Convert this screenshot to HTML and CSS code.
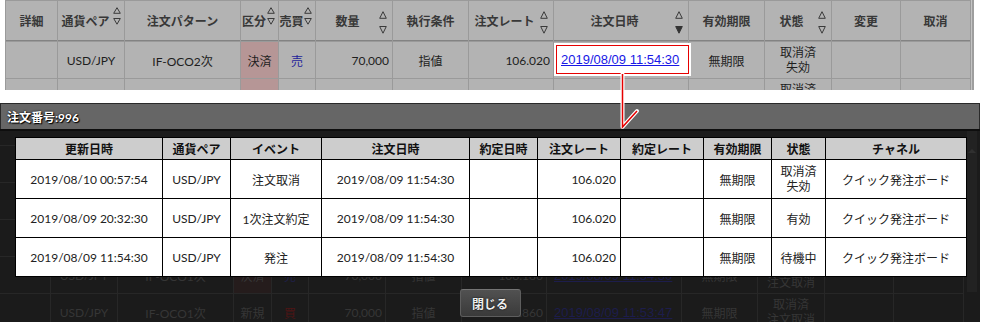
FILE: index.html
```html
<!DOCTYPE html>
<html lang="ja">
<head>
<meta charset="utf-8">
<title>注文履歴</title>
<link rel="stylesheet" href="styles.css">
</head>
<body>
<div class="top">
  <div class="tgrid">
    <div class="th">詳細</div>
    <div class="th sort tight"><span class="lbl">通貨ペア</span><svg class="arr t" width="8" height="18" viewBox="0 0 8 18"><path d="M4 .7 7.3 6.3H.7Z"/><path d="M.7 11.5h6.6L4 17.2Z"/></svg></div>
    <div class="th">注文パターン</div>
    <div class="th sort tight"><span class="lbl">区分</span><svg class="arr t" width="8" height="18" viewBox="0 0 8 18"><path d="M4 .7 7.3 6.3H.7Z"/><path d="M.7 11.5h6.6L4 17.2Z"/></svg></div>
    <div class="th sort tight"><span class="lbl">売買</span><svg class="arr t" width="8" height="18" viewBox="0 0 8 18"><path d="M4 .7 7.3 6.3H.7Z"/><path d="M.7 11.5h6.6L4 17.2Z"/></svg></div>
    <div class="th sort"><span class="lbl">数量</span><svg class="arr w" width="8" height="23" viewBox="0 0 8 23"><path d="M4 .7 7.3 7.3H.7Z"/><path d="M.7 15.5h6.6L4 22.2Z"/></svg></div>
    <div class="th">執行条件</div>
    <div class="th sort"><span class="lbl">注文レート</span><svg class="arr w" width="8" height="23" viewBox="0 0 8 23"><path d="M4 .7 7.3 7.3H.7Z"/><path d="M.7 15.5h6.6L4 22.2Z"/></svg></div>
    <div class="th sort"><span class="lbl">注文日時</span><svg class="arr w" width="8" height="23" viewBox="0 0 8 23"><path d="M4 .7 7.3 7.3H.7Z"/><path class="f" d="M.7 15.5h6.6L4 22.2Z"/></svg></div>
    <div class="th">有効期限</div>
    <div class="th sort"><span class="lbl">状態</span><svg class="arr w" width="8" height="23" viewBox="0 0 8 23"><path d="M4 .7 7.3 7.3H.7Z"/><path d="M.7 15.5h6.6L4 22.2Z"/></svg></div>
    <div class="th">変更</div>
    <div class="th">取消</div>

    <div></div>
    <div>USD/JPY</div>
    <div>IF-OCO2次</div>
    <div class="pink">決済</div>
    <div class="sell">売</div>
    <div class="num">70,000</div>
    <div>指値</div>
    <div class="num">106.020</div>
    <div class="hlcell"><div class="hl"><a class="hl-in" href="#">2019/08/09 11:54:30</a></div></div>
    <div>無期限</div>
    <div class="st"><span>取消済</span><span>失効</span></div>
    <div></div>
    <div></div>

    <div></div><div></div><div></div>
    <div class="pink"></div>
    <div></div><div></div><div></div><div></div><div></div><div></div>
    <div class="st"><span>取消済</span><span>失効</span></div>
    <div></div><div></div>
  </div>
  <div class="tscroll"></div>
</div>

<div class="dlg">
  <div class="dlg-title">注文番号:996</div>
  <div class="dlg-body">
    <div class="dim">
      <div></div><div></div><div></div><div class="dpink"></div><div></div><div></div><div></div><div></div><div></div><div></div><div></div><div></div><div></div>
      <div></div><div></div><div></div><div class="dpink"></div><div></div><div></div><div></div><div></div><div></div><div></div><div></div><div></div><div></div>
      <div></div><div></div><div></div><div class="dpink"></div><div></div><div></div><div></div><div></div><div></div><div></div><div></div><div></div><div></div>
      <div></div>
      <div>USD/JPY</div>
      <div>IF-OCO1次</div>
      <div class="dpink">決済</div>
      <div class="dsell">売</div>
      <div class="num">70,000</div>
      <div>指値</div>
      <div class="num">106.180</div>
      <div class="dlink"><span>2019/08/09 11:54:30</span></div>
      <div>無期限</div>
      <div class="st"><span>取消済</span><span>注文取消</span></div>
      <div></div>
      <div></div>
      <div></div>
      <div>USD/JPY</div>
      <div>IF-OCO1次</div>
      <div>新規</div>
      <div class="dbuy">買</div>
      <div class="num">70,000</div>
      <div>指値</div>
      <div class="num">105.860</div>
      <div class="dlink"><span>2019/08/09 11:53:47</span></div>
      <div>無期限</div>
      <div class="st"><span>取消済</span><span>注文取消</span></div>
      <div></div>
      <div></div>
    </div>
    <div class="dim-scroll"><span class="dim-up"></span></div>

    <div class="dgrid">
      <div class="dh">更新日時</div>
      <div class="dh">通貨ペア</div>
      <div class="dh">イベント</div>
      <div class="dh">注文日時</div>
      <div class="dh">約定日時</div>
      <div class="dh">注文レート</div>
      <div class="dh">約定レート</div>
      <div class="dh">有効期限</div>
      <div class="dh">状態</div>
      <div class="dh">チャネル</div>

      <div>2019/08/10 00:57:54</div>
      <div>USD/JPY</div>
      <div>注文取消</div>
      <div>2019/08/09 11:54:30</div>
      <div></div>
      <div class="num">106.020</div>
      <div></div>
      <div>無期限</div>
      <div class="st"><span>取消済</span><span>失効</span></div>
      <div>クイック発注ボード</div>

      <div>2019/08/09 20:32:30</div>
      <div>USD/JPY</div>
      <div>1次注文約定</div>
      <div>2019/08/09 11:54:30</div>
      <div></div>
      <div class="num">106.020</div>
      <div></div>
      <div>無期限</div>
      <div>有効</div>
      <div>クイック発注ボード</div>

      <div>2019/08/09 11:54:30</div>
      <div>USD/JPY</div>
      <div>発注</div>
      <div>2019/08/09 11:54:30</div>
      <div></div>
      <div class="num">106.020</div>
      <div></div>
      <div>無期限</div>
      <div>待機中</div>
      <div>クイック発注ボード</div>
    </div>

    <button class="close" type="button">閉じる</button>
  </div>
</div>

<svg class="conn" width="981" height="322" viewBox="0 0 981 322">
  <path class="halo" d="M622.5 74V127L637 111"/>
  <path class="ln" d="M622.5 74V127L637 111"/>
</svg>
</body>
</html>
```

FILE: styles.css
```css
* { box-sizing: border-box; }
html, body { margin: 0; padding: 0; }
body {
  width: 981px;
  height: 322px;
  overflow: hidden;
  position: relative;
  background: #fff;
  font-family: Lato, "Noto Sans CJK JP", sans-serif;
  font-size: 12px;
  color: #1e1e1e;
}

/* ---------- dimmed page table (top) ---------- */
.top {
  height: 90px;
  overflow: hidden;
  display: flex;
  align-items: flex-start;
  padding-left: 5px;
}
.tgrid {
  display: grid;
  grid-template-columns: 51px 66px 115px 37px 36px 76px 75px 84px 134px 75px 66px 68px 69px;
  grid-template-rows: 40px 36px 36px;
  gap: 1px;
  padding: 1px;
  background: #9a9a9a;
}
.tgrid > div {
  background: #b3b3b3;
  display: flex;
  align-items: center;
  justify-content: center;
  white-space: nowrap;
}
.tgrid > .th {
  font-weight: bold;
  color: #383838;
  border-bottom: 1px solid #838383;
}
.tgrid > .th.sort {
  justify-content: flex-start;
  padding-right: 5px;
}
.tgrid > .th.tight { padding-right: 3px; }
.lbl { flex: 1; text-align: center; }
.arr { flex: none; }
.arr path { fill: none; stroke: #3a3a3a; stroke-width: 1; }
.arr path.f { fill: #333; stroke: #333; }
.arr.t { align-self: flex-start; margin-top: 6px; }
.arr.w { margin-top: 3px; }

.tgrid > .pink { background: #b69696; }
.tgrid > .sell { color: #24249a; }
.tgrid > .num, .dim > .num { justify-content: flex-end; padding-right: 3px; }
.st { flex-direction: column; line-height: 15px; }
.tgrid > .st { flex-direction: column; }

.tgrid > .hlcell { align-items: flex-start; justify-content: flex-start; }
.hl {
  position: relative;
  z-index: 2;
  margin-top: 1px;
  width: 137px;
  height: 33px;
  flex: none;
  background: #fff;
  padding: 2px;
}
.hl-in {
  display: flex;
  align-items: center;
  height: 100%;
  border: 1px solid #e60000;
  padding-left: 4px;
  font-family: "Liberation Sans", Arial, sans-serif;
  font-size: 13px;
  color: #1818e6;
  text-decoration: underline;
}
.tscroll {
  width: 3px;
  height: 90px;
  border-left: 1px solid #c4c4c4;
  background: #9e9e9e;
}

/* ---------- dialog ---------- */
.dlg {
  width: 980px;
  margin-top: 13px;
}
.dlg-title {
  height: 26px;
  background: #666;
  border: 1px solid #2a2a2a;
  border-bottom: none;
  color: #fff;
  font-weight: bold;
  font-size: 12px;
  padding-left: 6px;
  display: flex;
  align-items: center;
  text-shadow: 0 0 2px #000, 1px 1px 1px #000;
}
.dlg-body {
  position: relative;
  height: 193px;
  overflow: hidden;
  background: #1b1b1b;
  border-top: 2px solid #0e0e0e;
  padding-top: 6px;
}

/* dimmed background rows seen through the modal */
.dim {
  position: absolute;
  top: 14px;
  left: -2px;
  display: grid;
  grid-template-columns: 51px 66px 115px 37px 36px 76px 75px 84px 134px 75px 66px 68px 69px;
  grid-template-rows: repeat(5, 36px);
  gap: 1px;
  padding: 1px;
  background: #272727;
  color: #363636;
  font-size: 12px;
}
.dim > div {
  background: #1b1b1b;
  display: flex;
  align-items: center;
  justify-content: center;
  white-space: nowrap;
}
.dim > .dpink { background: #251c1c; }
.dim > .dsell { color: #20204a; }
.dim > .dbuy { color: #4e1515; }
.dim > .dlink {
  justify-content: flex-start;
  padding-left: 7px;
  font-family: "Liberation Sans", Arial, sans-serif;
  font-size: 13px;
  color: #1d1d4c;
  text-decoration: underline;
}
.dim-scroll {
  position: absolute;
  left: 967px;
  top: 0;
  width: 10px;
  height: 161px;
  background: #222;
}
.dim-up {
  display: block;
  margin: 18px auto 0;
  width: 0;
  height: 0;
  border-left: 4px solid transparent;
  border-right: 4px solid transparent;
  border-bottom: 4px solid #303030;
}

.dgrid {
  position: relative;
  z-index: 1;
  display: grid;
  grid-template-columns: 146px 67px 90px 147px 67px 82px 82px 67px 53px 140px;
  grid-template-rows: 21px 38px 38px 38px;
  gap: 1px;
  padding: 1px;
  background: #000;
  width: max-content;
  margin-left: 15px;
}
.dgrid > div {
  background: #fff;
  display: flex;
  align-items: center;
  justify-content: center;
  white-space: nowrap;
  color: #222;
}
.dgrid > .dh {
  background: #cdcdcd;
  font-weight: bold;
  color: #111;
}
.dgrid > .num { justify-content: flex-end; padding-right: 4px; }
.dgrid > .st { flex-direction: column; }

.close {
  position: relative;
  z-index: 1;
  display: block;
  margin: 12px auto 0;
  width: 61px;
  height: 28px;
  padding: 0;
  font-family: Lato, "Noto Sans CJK JP", sans-serif;
  font-size: 12px;
  font-weight: bold;
  color: #eee;
  background: linear-gradient(#515151, #3a3a3a);
  border: 1px solid #5e5e5e;
  border-top-color: #747474;
  border-radius: 3px;
  text-shadow: 0 0 2px #000;
}

/* connector from highlighted cell to dialog */
.conn {
  position: absolute;
  left: 0;
  top: 0;
  z-index: 10;
  pointer-events: none;
}
.conn .halo {
  fill: none;
  stroke: #fff;
  stroke-width: 4;
  stroke-linecap: round;
  stroke-linejoin: round;
}
.conn .ln {
  fill: none;
  stroke: #e60000;
  stroke-width: 1.5;
}
```
